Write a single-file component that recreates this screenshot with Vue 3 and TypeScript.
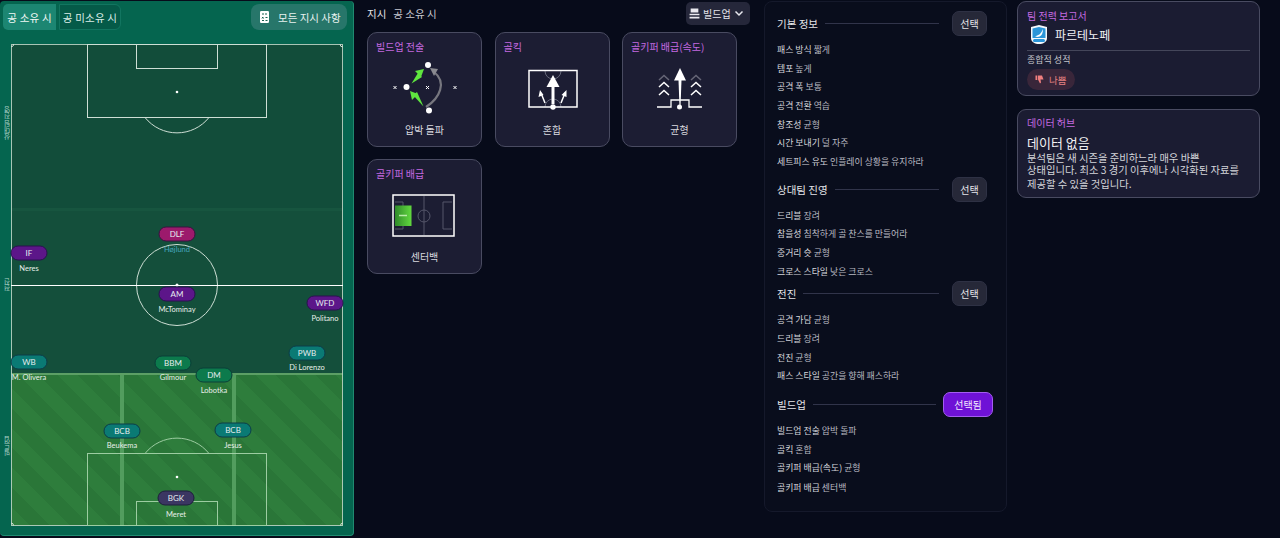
<script setup lang="ts">
interface Player {
  role: string
  name: string
  x: number
  y: number
  tone: string
  nameY: number
  nameTone?: string
}

interface TacticGroup {
  title: string
  selected?: boolean
  cls: string
  rows: [string, string][]
}

// 피치 위 선수 위치 (피치 기준 px)
const players: Player[] = [
  { role: 'DLF', name: 'Højlund', x: 166, y: 190, nameY: 205, tone: 'magenta', nameTone: 'blue' },
  { role: 'IF', name: 'Neres', x: 18, y: 209, nameY: 224, tone: 'purple' },
  { role: 'AM', name: 'McTominay', x: 166, y: 250, nameY: 265, tone: 'purple' },
  { role: 'WFD', name: 'Politano', x: 314, y: 259, nameY: 274, tone: 'purple' },
  { role: 'WB', name: 'M. Olivera', x: 18, y: 318, nameY: 333, tone: 'teal' },
  { role: 'BBM', name: 'Gilmour', x: 162, y: 319, nameY: 333, tone: 'green' },
  { role: 'DM', name: 'Lobotka', x: 203, y: 331, nameY: 346, tone: 'green' },
  { role: 'PWB', name: 'Di Lorenzo', x: 296, y: 309, nameY: 323, tone: 'teal' },
  { role: 'BCB', name: 'Beukema', x: 111, y: 387, nameY: 401, tone: 'teal' },
  { role: 'BCB', name: 'Jesus', x: 222, y: 386, nameY: 401, tone: 'teal' },
  { role: 'BGK', name: 'Meret', x: 165, y: 454, nameY: 470, tone: 'slate' }
]

const groups: TacticGroup[] = [
  {
    title: '기본 정보',
    cls: 'g1',
    rows: [
      ['패스 방식', '짧게'],
      ['템포', '높게'],
      ['공격 폭', '보통'],
      ['공격 전환', '역습'],
      ['창조성', '균형'],
      ['시간 보내기', '덜 자주'],
      ['세트피스 유도', '인플레이 상황을 유지하라']
    ]
  },
  {
    title: '상대팀 진영',
    cls: 'g2',
    rows: [
      ['드리블', '장려'],
      ['참을성', '침착하게 골 찬스를 만들어라'],
      ['중거리 슛', '균형'],
      ['크로스 스타일', '낮은 크로스']
    ]
  },
  {
    title: '전진',
    cls: 'g3',
    rows: [
      ['공격 가담', '균형'],
      ['드리블', '장려'],
      ['전진', '균형'],
      ['패스 스타일', '공간을 향해 패스하라']
    ]
  },
  {
    title: '빌드업',
    selected: true,
    cls: 'g4',
    rows: [
      ['빌드업 전술', '압박 돌파'],
      ['골킥', '혼합'],
      ['골키퍼 배급(속도)', '균형'],
      ['골키퍼 배급', '센터백']
    ]
  }
]
</script>

<template>
  <div class="page">
    <section class="pitch-panel">
      <div class="panel-top">
        <div class="tabs">
          <button class="tab active">공 소유 시</button>
          <button class="tab">공 미소유 시</button>
        </div>
        <button class="all-btn">
          <svg width="9" height="12" viewBox="0 0 9 12">
            <rect x="0" y="0" width="9" height="12" rx="1.200" fill="#fff" />
            <path d="M2 3h2M6 2v2M2 6l1.500 1.500M3.500 6L2 7.500M5.500 6.500h2M2 9.500h2M5.500 9.500h2" stroke="#17604f" stroke-width="1" />
          </svg>
          모든 지시 사항
        </button>
      </div>
      <div class="pitch-row">
        <div class="side-labels">
          <span class="side s1">상대팀 진영</span>
          <span class="side s2">전진</span>
          <span class="side s3">빌드업</span>
        </div>
        <div class="pitch">
          <div class="zone-top"></div>
          <div class="zone-bottom"></div>
          <svg class="lines" width="332" height="482" viewBox="0 0 332 482" fill="none">
            <g stroke="#e3efe6" stroke-width="1" opacity="0.9">
              <rect x="0.500" y="0.500" width="331" height="481" stroke="#b9d3c3" />
              <rect x="76.500" y="0.500" width="179" height="73" />
              <rect x="125.500" y="0.500" width="81" height="24" />
              <path d="M134 73.500a41 41 0 0 0 64 0" />
              <circle cx="166" cy="241" r="40.500" />
              <rect x="76.500" y="409.500" width="179" height="72" stroke="#a9d6ad" />
              <rect x="125.500" y="457.500" width="81" height="24" stroke="#a9d6ad" />
              <path d="M134 409.500a41 41 0 0 1 64 0" stroke="#a9d6ad" />
              <path d="M0 2.500a2 2 0 0 0 2.500-2.500M332 3a3 3 0 0 1-3-3M0 479a2.500 2.500 0 0 1 2.500 2.500M332 479a2.500 2.500 0 0 0-2.500 2.500" />
            </g>
            <path d="M0 241.500h332" stroke="#fff" stroke-width="1" />
            <circle cx="166" cy="48" r="1.300" fill="#fff" />
            <circle cx="166" cy="241" r="1.500" fill="#fff" />
            <circle cx="166" cy="433" r="1.300" fill="#fff" />
          </svg>
          <template v-for="p in players" :key="p.name">
            <div class="pill" :class="p.tone" :style="{ left: p.x + 'px', top: p.y + 'px' }">{{ p.role }}</div>
            <div class="pname" :class="p.nameTone" :style="{ left: p.x + 'px', top: p.nameY + 'px' }">{{ p.name }}</div>
          </template>
        </div>
      </div>
    </section>

    <section class="middle">
      <div class="mid-head">
        <div class="mid-title"><span>지시</span><span class="sub">공 소유 시</span></div>
        <button class="phase-btn">
          <svg width="11" height="11" viewBox="0 0 10 10"><path d="M1.500 0.500h7v3.500h-7zM0.500 5.200h9v1.500h-9zM0.500 8h9v1.500h-9z" fill="#e8e8ee" /></svg>
          빌드업
          <svg width="10" height="7" viewBox="0 0 10 7" fill="none"><path d="M1.500 1.500l3.500 3.500 3.500-3.500" stroke="#e8e8ee" stroke-width="1.500" /></svg>
        </button>
      </div>
      <div class="cards">
        <article class="card">
          <h4>빌드업 전술</h4>
          <svg class="art a1" width="92" height="70" viewBox="0 0 92 70" fill="none">
            <path d="M58 53C72 44 79 28 66 18" stroke="#77777f" stroke-width="2.200" />
            <path d="M62 14l8 1-4 7z" fill="#8a8a90" />
            <path d="M43.500 29.500L50 19l4 4z" fill="#5fe63f" />
            <path d="M56 15l-9 2 6 6z" fill="#5fe63f" />
            <path d="M55.500 52.500L45 41l4-3z" fill="#5fe63f" />
            <path d="M42 37l2 9 6-6z" fill="#5fe63f" />
            <circle cx="60" cy="11" r="3" fill="#fff" />
            <circle cx="38.500" cy="33" r="3" fill="#fff" />
            <circle cx="61" cy="56.500" r="3" fill="#fff" />
            <path d="M25.500 32l3 3M28.500 32l-3 3M58 32l3 3M61 32l-3 3M85.500 32l3 3M88.500 32l-3 3" stroke="#fff" />
          </svg>
          <p>압박 돌파</p>
        </article>
        <article class="card">
          <h4>골킥</h4>
          <svg class="art a2" width="90" height="70" viewBox="0 0 90 70" fill="none">
            <path d="M38 17a8 8 0 0 0 16 0M38 53a8 8 0 0 1 16 0" stroke="#66687a" />
            <rect x="22" y="16.500" width="48" height="36.500" stroke="#fff" stroke-width="1.500" />
            <path d="M46 50V32" stroke="#fff" stroke-width="3" />
            <path d="M46 21l-6.500 12h13z" fill="#fff" />
            <path d="M38 49L34 39M54 49l4-10" stroke="#fff" stroke-width="1.500" />
            <path d="M33 36l-1.500 7 5-2zM59.500 36l-5 5 5 2z" fill="#fff" />
            <circle cx="46" cy="53" r="2.700" fill="#fff" />
          </svg>
          <p>혼합</p>
        </article>
        <article class="card">
          <h4>골키퍼 배급(속도)</h4>
          <svg class="art a3" width="90" height="70" viewBox="0 0 90 70" fill="none">
            <path d="M13 53h14v-7h18v7h13" stroke="#fff" stroke-width="1.300" />
            <path d="M34.500 26h3l-1 27h-1z" fill="#fff" transform="translate(0 0)" />
            <path d="M36 14l-6 12.500h12z" fill="#fff" />
            <path d="M15 26l5-4.500 5 4.500M47 26l5-4.500 5 4.500" stroke="#666677" stroke-width="1.500" />
            <path d="M15 33l5-4.500 5 4.500M15 41l5-4.500 5 4.500M47 33l5-4.500 5 4.500M47 41l5-4.500 5 4.500" stroke="#fff" stroke-width="1.500" />
            <circle cx="35.500" cy="53" r="2.500" fill="#fff" />
          </svg>
          <p>균형</p>
        </article>
        <article class="card">
          <h4>골키퍼 배급</h4>
          <svg class="art a4" width="90" height="70" viewBox="0 0 90 70" fill="none">
            <defs>
              <linearGradient id="gkFill" x1="0" x2="1" y1="0" y2="0">
                <stop offset="0" stop-color="#2f8a2a" />
                <stop offset="1" stop-color="#62d93f" />
              </linearGradient>
            </defs>
            <rect x="13" y="14" width="61" height="41" stroke="#fff" stroke-width="1.500" />
            <g stroke="#55566a">
              <path d="M44 15v39M15 21h8v27h-8M72 21h-9v27h9" />
              <circle cx="44" cy="35" r="6" />
            </g>
            <rect x="15" y="24.500" width="16.500" height="20.500" fill="url(#gkFill)" />
            <path d="M19 34.500h8" stroke="#b8eba8" stroke-width="1.500" />
          </svg>
          <p>센터백</p>
        </article>
      </div>
    </section>

    <section class="list-panel">
      <div v-for="g in groups" :key="g.title" class="group" :class="g.cls">
        <div class="group-head">
          <span class="group-title">{{ g.title }}</span>
          <span class="rule"></span>
          <button class="pick" :class="{ on: g.selected }">{{ g.selected ? '선택됨' : '선택' }}</button>
        </div>
        <div v-for="r in g.rows" :key="r[0]" class="row"><span class="k">{{ r[0] }}</span> <span class="v">{{ r[1] }}</span></div>
      </div>
    </section>

    <aside class="reports">
      <div class="box report">
        <h4>팀 전력 보고서</h4>
        <div class="team">
          <svg width="20" height="21" viewBox="0 0 20 21">
            <path d="M2 3l8-2 8 2v11c0 4-4 6-8 6s-8-2-8-6z" fill="#f4f8fb" />
            <path d="M3.500 4.500l6.500-1.500 6.500 1.500v9.500h-13z" fill="#2a95d8" />
            <path d="M6 12c3 0 6-2 8-7 0 5-2 8-6 8z" fill="#fff" />
            <rect x="4" y="15" width="12" height="3" rx="1.500" fill="#2a95d8" />
          </svg>
          <span>파르테노페</span>
        </div>
        <div class="report-sub">종합적 성적</div>
        <div class="grade">
          <svg width="9" height="9" viewBox="0 0 9 9"><path d="M0.500 0.500h1.800v4.500h-1.800zM3 0.500h4l1.500 4h-3l0.500 3-1 1-2-4z" fill="#f07f7f" /></svg>
          나쁨
        </div>
      </div>
      <div class="box hub">
        <h4>데이터 허브</h4>
        <div class="empty">데이터 없음</div>
        <p>분석팀은 새 시즌을 준비하느라 매우 바쁜<br />상태입니다. 최소 3 경기 이후에나 시각화된 자료를<br /><span>제공할 수 있을 것입니다.</span></p>
      </div>
    </aside>
  </div>
</template>

<style>
html,
body {
  margin: 0;
  background: #070b1a;
}
</style>

<style scoped>
.page {
  width: 1280px;
  height: 538px;
  box-sizing: border-box;
  overflow: hidden;
  display: grid;
  grid-template-columns: 354px 397px 255px 274px;
  background: #070b1a;
  font-family: "Noto Sans CJK KR", "Noto Sans", sans-serif;
  color: #e6e6ea;
  padding-top: 1px;
}

button {
  font-family: inherit;
  cursor: pointer;
}

/* 왼쪽 피치 패널 */
.pitch-panel {
  width: 354px;
  height: 535px;
  box-sizing: border-box;
  background: #05654f;
  border-radius: 4px;
  border-right: 1px solid #1f8a70;
  border-bottom: 1px solid #1f8a70;
  padding: 3px 6px 0 3px;
}

.panel-top {
  display: flex;
  justify-content: space-between;
  height: 26px;
  margin-bottom: 14px;
}

.tabs {
  display: flex;
  gap: 3px;
}

.tab {
  flex: none;
  width: 53px;
  border: 0;
  padding: 0;
  margin: 0;
  border-radius: 5px 0 0 5px;
  background: transparent;
  color: #dceee8;
  font-size: 10.500px;
  letter-spacing: 0.200px;
  white-space: nowrap;
}

.tab + .tab {
  width: 62px;
  border: 1px solid #127560;
  border-radius: 0 6px 6px 0;
  background: #055a48;
}

.tab.active {
  background: #1c8672;
  color: #f0f8f5;
}

.all-btn {
  display: flex;
  align-items: center;
  gap: 9px;
  width: 96px;
  box-sizing: border-box;
  padding: 0 0 0 9px;
  border: 0;
  border-radius: 8px;
  background: #27766a;
  color: #e8f2ef;
  font-size: 10.500px;
  white-space: nowrap;
}

.pitch-row {
  display: flex;
}

.side-labels {
  width: 8px;
  height: 482px;
  position: relative;
}

.side {
  position: absolute;
  left: 0;
  writing-mode: vertical-rl;
  transform: rotate(180deg);
  font-size: 6.500px;
  line-height: 8px;
  color: #a9cfc5;
  white-space: nowrap;
}

.s1 { top: 62px; }
.s2 { top: 234px; }
.s3 { top: 392px; }

.pitch {
  position: relative;
  width: 332px;
  height: 482px;
  background: #144f3b;
}

.zone-top {
  position: absolute;
  left: 0;
  right: 0;
  top: 0;
  height: 164px;
  background: #124d3a;
  border-bottom: 3px solid #17553f;
}

.zone-bottom {
  position: absolute;
  left: 0;
  right: 0;
  bottom: 0;
  height: 153px;
  background:
    linear-gradient(90deg, transparent 109px, #529d5e 109px, #529d5e 113px, transparent 113px, transparent 221px, #529d5e 221px, #529d5e 225px, transparent 225px),
    repeating-linear-gradient(45deg, #2e7d3c 0 14px, #2a7638 14px 28px);
  border-top: 2px solid #5c9f65;
  box-sizing: border-box;
}

.lines {
  position: absolute;
  left: 0;
  top: 0;
}

.pill {
  position: absolute;
  width: 35px;
  height: 13px;
  transform: translate(-50%, -50%);
  border-radius: 8px;
  border: 1px solid #0c2b3a;
  font-size: 8px;
  line-height: 13px;
  text-align: center;
  color: #e4ecef;
  font-family: Lato, "Noto Sans", sans-serif;
}

.pill.magenta { background: #9c1a6c; border-color: #3a1240; }
.pill.purple { background: #5c1689; border-color: #2a1150; }
.pill.teal { background: #0a7a74; border-color: #0c3c48; }
.pill.green { background: #0c7a4c; border-color: #0a3e38; }
.pill.slate { background: #3b3662; border-color: #1e1e3c; }

.pname {
  position: absolute;
  transform: translate(-50%, -50%);
  font-size: 7.500px;
  color: #e8efea;
  white-space: nowrap;
  font-family: Lato, "Noto Sans", sans-serif;
}

.pname.blue {
  color: #45a6bd;
}

/* 가운데 지시 카드 */
.middle {
  padding-left: 13px;
}

.mid-head {
  display: flex;
  justify-content: space-between;
  align-items: center;
  height: 24px;
  width: 383px;
  margin-bottom: 7px;
}

.mid-title {
  display: flex;
  gap: 7px;
  font-size: 10.500px;
}

.mid-title .sub {
  color: #c9cad2;
}

.phase-btn {
  display: flex;
  align-items: center;
  gap: 3px;
  height: 23px;
  width: 64px;
  box-sizing: border-box;
  padding: 0 0 0 3px;
  border: 0;
  border-radius: 5px;
  background: #25273a;
  color: #e4e4ea;
  font-size: 10px;
  white-space: nowrap;
}

.cards {
  display: grid;
  grid-template-columns: repeat(3, 115px);
  grid-auto-rows: 115px;
  gap: 12px 12.500px;
}

.card {
  box-sizing: border-box;
  border: 1px solid #494b61;
  border-radius: 10px;
  background: #1c1d33;
  padding: 7px 8px 0;
  position: relative;
  text-align: center;
}

.card h4 {
  margin: 0;
  font-size: 10px;
  line-height: 14px;
  font-weight: 400;
  color: #c46ae0;
  text-align: left;
  white-space: nowrap;
}

.card .art {
  position: absolute;
  top: 21px;
}

.card .a1 { left: 0; }
.card .a2 { left: 11px; }
.card .a3 { left: 21px; }
.card .a4 { left: 12px; }

.card p {
  position: absolute;
  left: 0;
  right: 0;
  top: 90px;
  margin: 0;
  font-size: 10px;
  line-height: 14px;
  color: #d9d9df;
}

/* 오른쪽 전술 목록 */
.list-panel {
  width: 243px;
  height: 511px;
  box-sizing: border-box;
  border: 1px solid #15192b;
  border-radius: 8px;
  background: #090d1c;
  padding: 0 12px;
  margin-left: 13px;
}

.group-head {
  display: flex;
  align-items: center;
  height: 25px;
  gap: 7px;
  color: #e4e4e8;
}

.group-title {
  font-size: 10.500px;
  white-space: nowrap;
}

.rule {
  flex: 1;
  height: 1px;
  background: #31344a;
  margin-right: 6px;
}

.pick {
  width: 35px;
  height: 25px;
  flex: none;
  padding: 0;
  border: 1px solid #2e3144;
  border-radius: 7px;
  background: #262838;
  color: #e6e6ea;
  font-size: 10px;
  margin-right: 7px;
}

.pick.on {
  width: 50px;
  margin-right: 1px;
  margin-left: -6px;
  background: #6f12d6;
  border-color: #a45df0;
  color: #f3eaff;
}

.row {
  font-size: 8.900px;
  line-height: 18.670px;
  height: 18.670px;
  white-space: nowrap;
  color: #cfd0d6;
}

.k {
  color: #d6d7dc;
}

.v {
  color: #b9bac2;
}

.g1 { padding-top: 9px; }
.g1 .group-head { margin-bottom: 5px; }
.g2 { padding-top: 5px; }
.g2 .group-head { margin-bottom: 5px; }
.g3 { padding-top: 0; }
.g3 .group-head { margin-bottom: 5px; }
.g4 { padding-top: 6px; }
.g4 .group-head { margin-bottom: 5px; }
.g4 .row:last-child { margin-top: 1.500px; }

/* 보고서 */
.reports {
  margin-left: 11px;
  width: 243px;
  display: flex;
  flex-direction: column;
  gap: 13px;
}

.box {
  box-sizing: border-box;
  border: 1px solid #494b61;
  border-radius: 9px;
  background: #1b1c32;
  padding: 7px 9px 0;
}

.box h4 {
  margin: 0;
  font-size: 10px;
  line-height: 14px;
  font-weight: 400;
  color: #c46ae0;
}

.report {
  height: 95px;
}

.team {
  display: flex;
  align-items: center;
  gap: 6px;
  height: 22px;
  margin: 0 0 3px;
  font-size: 12px;
  color: #f1f1f4;
  padding: 0 0 5px 2px;
  border-bottom: 1px solid #44465a;
}

.report-sub {
  font-size: 9px;
  line-height: 11px;
  color: #c5c6cc;
}

.grade {
  display: inline-flex;
  align-items: center;
  gap: 5px;
  width: 48px;
  height: 21px;
  box-sizing: border-box;
  padding-left: 8px;
  margin-top: 3px;
  border-radius: 11px;
  background: #39263a;
  font-size: 9.500px;
  color: #e88080;
}

.hub {
  height: 89px;
  padding-top: 6px;
}

.empty {
  font-size: 13px;
  line-height: 18px;
  margin-top: 4px;
  color: #f2f2f4;
}

.hub p {
  margin: 0;
  font-size: 10.300px;
  line-height: 11.500px;
  color: #d4d5da;
}

.hub p span {
  display: block;
  margin-top: 2.500px;
}
</style>
